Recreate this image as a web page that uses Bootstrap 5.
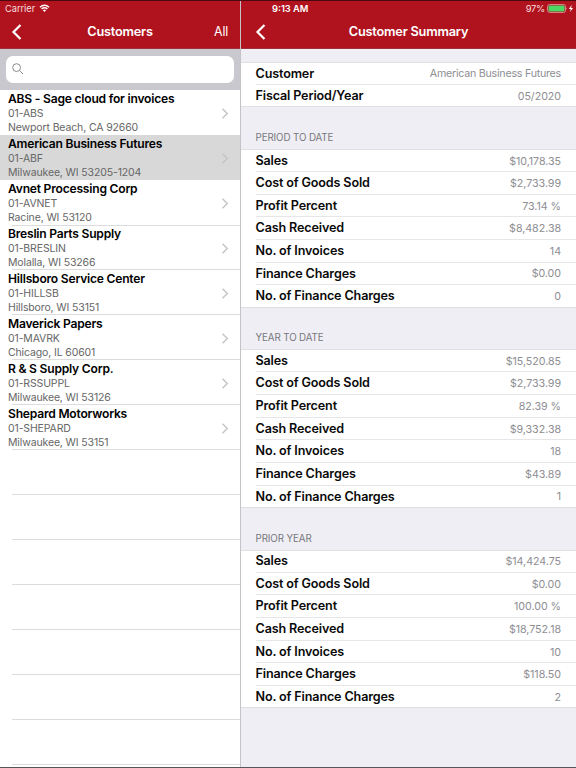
<!DOCTYPE html>
<html lang="en">
<head>
<meta charset="utf-8">
<meta name="viewport" content="width=device-width, initial-scale=1">
<title>Customer Summary</title>
<link href="https://cdn.jsdelivr.net/npm/bootstrap@5.3.0/dist/css/bootstrap.min.css" rel="stylesheet">
<style>
  body { font-family: Inter, "Liberation Sans", sans-serif; height: 768px; overflow: hidden; color: #0a0a0a; line-height: 1; }
  .app { height: 768px; border-top: 1px solid #4a0a0e; border-bottom: 1px solid #55555a; }
  .side { width: 241px; border-right: 1px solid #c3c3c8; }
  .bar { background: #b1131e; height: 47.5px; color: #fff; border-bottom: 1px solid #a1303c; }
  .status { height: 14px; font-size: 9.3px; padding-top: 1px; }
  .carrier { padding-left: 5px; letter-spacing: -.05px; color: #f6dcde; }
  .clock { padding-left: 31px; }
  .pct { letter-spacing: -.2px; padding-right: 2px; color: #f6dcde; }
  .batt { margin-right: 1px; }
  .titles { height: 32px; padding-top: 1.5px; font-size: 12.75px; letter-spacing: -.21px; }
  .titles .heading { font-weight: 600; padding-top: 2px; }
  .back { width: 40px; padding-left: 11px; }
  .detail .back { padding-left: 14px; }
  .all { width: 40px; padding: 1px 12px 0 0; font-size: 12.4px; }
  .search { background: #c9c8ce; height: 41.7px; padding: 7.4px 6px; }
  .field { background: #fff; height: 27px; border-radius: 7px; padding-left: 6px; }
  .cust { height: 44.93px; padding: 1.9px 11px 0 8px; position: relative; }
  .cust::after { content: ""; position: absolute; left: 12px; right: 0; bottom: -.6px; height: 1px; background: #dcdcde; }
  .cust.chosen { background: #d8d8d8; }
  .cust.chosen::after { display: none; }
  .cname { font-size: 12.1px; font-weight: 600; line-height: 14px; letter-spacing: -.22px; color: #000; }
  .cinfo { font-size: 10.5px; line-height: 13.7px; letter-spacing: -.13px; color: #666; }
  .cinfo:nth-child(2) { padding-top: 1.4px; }
  .detail { background: #efeef4; }
  .spacer { height: 13.3px; }
  .group { background: #fff; border-top: 1px solid #dfdee3; border-bottom: 1px solid #dfdee3; padding-left: 14.5px; }
  .line { height: 22.67px; padding-right: 15px; border-bottom: 1px solid #e6e6e8; }
  .line:first-child { height: 22px; }
  .line:last-child { border-bottom: 0; height: 21.4px; }
  .key { font-size: 12.6px; font-weight: 600; letter-spacing: -.15px; padding-top: 1.2px; }
  .val { font-size: 10.7px; letter-spacing: -.05px; color: #8e8e93; padding-top: 3px; }
  .who { letter-spacing: -.25px; }
  .section { height: 41.7px; padding: 0 0 6px 14.5px; font-size: 9.75px; letter-spacing: -.1px; color: #77777c; }
</style>
</head>
<body>
<div class="app d-flex">
  <aside class="side bg-white flex-shrink-0 overflow-hidden">
    <header class="bar">
      <div class="status carrier d-flex align-items-center">Carrier
        <svg class="ms-1" width="11" height="9" viewBox="0 0 12 9" fill="none" stroke="#fff" stroke-width="1.5"><path d="M1 3.1Q6-1.1 11 3.1M2.8 5Q6 2.3 9.2 5"/><path d="M4.2 6.3Q6 4.9 7.8 6.3L6 8.4Z" fill="#fff" stroke="none"/></svg>
      </div>
      <div class="titles d-flex align-items-center">
        <span class="back"><svg width="11" height="16" viewBox="0 0 11 16" fill="none" stroke="#fff" stroke-width="2.2"><path d="M9.5 1L2.5 8L9.5 15"/></svg></span>
        <span class="heading flex-fill text-center">Customers</span>
        <span class="all text-end">All</span>
      </div>
    </header>
    <div class="search">
      <div class="field d-flex align-items-center"><svg width="12" height="12" viewBox="0 0 12 12" fill="none" stroke="#8a8a8e"><circle cx="4.6" cy="4.6" r="3.9"/><path d="M7.4 7.4L11 11"/></svg></div>
    </div>
    <div class="cust d-flex justify-content-between"><div><div class="cname">ABS - Sage cloud for invoices</div><div class="cinfo">01-ABS</div><div class="cinfo">Newport Beach, CA 92660</div></div><svg class="chev align-self-center" width="8" height="11" viewBox="0 0 8 11" fill="none" stroke="#c3c3c8" stroke-width="1.4"><path d="M1.5 .7L6.3 5.5L1.5 10.3"/></svg></div>
    <div class="cust chosen d-flex justify-content-between"><div><div class="cname">American Business Futures</div><div class="cinfo">01-ABF</div><div class="cinfo">Milwaukee, WI 53205-1204</div></div><svg class="chev align-self-center" width="8" height="11" viewBox="0 0 8 11" fill="none" stroke="#c3c3c8" stroke-width="1.4"><path d="M1.5 .7L6.3 5.5L1.5 10.3"/></svg></div>
    <div class="cust d-flex justify-content-between"><div><div class="cname">Avnet Processing Corp</div><div class="cinfo">01-AVNET</div><div class="cinfo">Racine, WI 53120</div></div><svg class="chev align-self-center" width="8" height="11" viewBox="0 0 8 11" fill="none" stroke="#c3c3c8" stroke-width="1.4"><path d="M1.5 .7L6.3 5.5L1.5 10.3"/></svg></div>
    <div class="cust d-flex justify-content-between"><div><div class="cname">Breslin Parts Supply</div><div class="cinfo">01-BRESLIN</div><div class="cinfo">Molalla, WI 53266</div></div><svg class="chev align-self-center" width="8" height="11" viewBox="0 0 8 11" fill="none" stroke="#c3c3c8" stroke-width="1.4"><path d="M1.5 .7L6.3 5.5L1.5 10.3"/></svg></div>
    <div class="cust d-flex justify-content-between"><div><div class="cname">Hillsboro Service Center</div><div class="cinfo">01-HILLSB</div><div class="cinfo">Hillsboro, WI 53151</div></div><svg class="chev align-self-center" width="8" height="11" viewBox="0 0 8 11" fill="none" stroke="#c3c3c8" stroke-width="1.4"><path d="M1.5 .7L6.3 5.5L1.5 10.3"/></svg></div>
    <div class="cust d-flex justify-content-between"><div><div class="cname">Maverick Papers</div><div class="cinfo">01-MAVRK</div><div class="cinfo">Chicago, IL 60601</div></div><svg class="chev align-self-center" width="8" height="11" viewBox="0 0 8 11" fill="none" stroke="#c3c3c8" stroke-width="1.4"><path d="M1.5 .7L6.3 5.5L1.5 10.3"/></svg></div>
    <div class="cust d-flex justify-content-between"><div><div class="cname">R &amp; S Supply Corp.</div><div class="cinfo">01-RSSUPPL</div><div class="cinfo">Milwaukee, WI 53126</div></div><svg class="chev align-self-center" width="8" height="11" viewBox="0 0 8 11" fill="none" stroke="#c3c3c8" stroke-width="1.4"><path d="M1.5 .7L6.3 5.5L1.5 10.3"/></svg></div>
    <div class="cust d-flex justify-content-between"><div><div class="cname">Shepard Motorworks</div><div class="cinfo">01-SHEPARD</div><div class="cinfo">Milwaukee, WI 53151</div></div><svg class="chev align-self-center" width="8" height="11" viewBox="0 0 8 11" fill="none" stroke="#c3c3c8" stroke-width="1.4"><path d="M1.5 .7L6.3 5.5L1.5 10.3"/></svg></div>
    <div class="cust"></div><div class="cust"></div><div class="cust"></div><div class="cust"></div><div class="cust"></div><div class="cust"></div><div class="cust"></div>
  </aside>
  <main class="detail flex-fill overflow-hidden">
    <header class="bar">
      <div class="status d-flex align-items-center">
        <span class="clock fw-semibold">9:13 AM</span>
        <span class="pct ms-auto">97%</span>
        <svg class="batt" width="28" height="9" viewBox="0 0 28 9"><rect x=".5" y=".5" width="18" height="8" rx="2" fill="none" stroke="#d98289"/><rect x="1.5" y="1.5" width="16" height="6" rx="1" fill="#4bd964"/><path d="M19.4 3.2Q20.6 4.5 19.4 5.8Z" fill="#e0a0a5"/><path d="M24.7 1L21.9 5H23.8L23 8L26 4H24.1Z" fill="#fff"/></svg>
      </div>
      <div class="titles d-flex align-items-center">
        <span class="back"><svg width="11" height="16" viewBox="0 0 11 16" fill="none" stroke="#fff" stroke-width="2.2"><path d="M9.5 1L2.5 8L9.5 15"/></svg></span>
        <span class="heading flex-fill text-center">Customer Summary</span>
        <span class="all"></span>
      </div>
    </header>
    <div class="spacer"></div>
    <div class="group">
      <div class="line d-flex align-items-center justify-content-between"><span class="key">Customer</span><span class="val who">American Business Futures</span></div>
      <div class="line d-flex align-items-center justify-content-between"><span class="key">Fiscal Period/Year</span><span class="val">05/2020</span></div>
    </div>
    <div class="section d-flex align-items-end">PERIOD TO DATE</div>
    <div class="group">
      <div class="line d-flex align-items-center justify-content-between"><span class="key">Sales</span><span class="val">$10,178.35</span></div>
      <div class="line d-flex align-items-center justify-content-between"><span class="key">Cost of Goods Sold</span><span class="val">$2,733.99</span></div>
      <div class="line d-flex align-items-center justify-content-between"><span class="key">Profit Percent</span><span class="val">73.14 %</span></div>
      <div class="line d-flex align-items-center justify-content-between"><span class="key">Cash Received</span><span class="val">$8,482.38</span></div>
      <div class="line d-flex align-items-center justify-content-between"><span class="key">No. of Invoices</span><span class="val">14</span></div>
      <div class="line d-flex align-items-center justify-content-between"><span class="key">Finance Charges</span><span class="val">$0.00</span></div>
      <div class="line d-flex align-items-center justify-content-between"><span class="key">No. of Finance Charges</span><span class="val">0</span></div>
    </div>
    <div class="section d-flex align-items-end">YEAR TO DATE</div>
    <div class="group">
      <div class="line d-flex align-items-center justify-content-between"><span class="key">Sales</span><span class="val">$15,520.85</span></div>
      <div class="line d-flex align-items-center justify-content-between"><span class="key">Cost of Goods Sold</span><span class="val">$2,733.99</span></div>
      <div class="line d-flex align-items-center justify-content-between"><span class="key">Profit Percent</span><span class="val">82.39 %</span></div>
      <div class="line d-flex align-items-center justify-content-between"><span class="key">Cash Received</span><span class="val">$9,332.38</span></div>
      <div class="line d-flex align-items-center justify-content-between"><span class="key">No. of Invoices</span><span class="val">18</span></div>
      <div class="line d-flex align-items-center justify-content-between"><span class="key">Finance Charges</span><span class="val">$43.89</span></div>
      <div class="line d-flex align-items-center justify-content-between"><span class="key">No. of Finance Charges</span><span class="val">1</span></div>
    </div>
    <div class="section d-flex align-items-end">PRIOR YEAR</div>
    <div class="group">
      <div class="line d-flex align-items-center justify-content-between"><span class="key">Sales</span><span class="val">$14,424.75</span></div>
      <div class="line d-flex align-items-center justify-content-between"><span class="key">Cost of Goods Sold</span><span class="val">$0.00</span></div>
      <div class="line d-flex align-items-center justify-content-between"><span class="key">Profit Percent</span><span class="val">100.00 %</span></div>
      <div class="line d-flex align-items-center justify-content-between"><span class="key">Cash Received</span><span class="val">$18,752.18</span></div>
      <div class="line d-flex align-items-center justify-content-between"><span class="key">No. of Invoices</span><span class="val">10</span></div>
      <div class="line d-flex align-items-center justify-content-between"><span class="key">Finance Charges</span><span class="val">$118.50</span></div>
      <div class="line d-flex align-items-center justify-content-between"><span class="key">No. of Finance Charges</span><span class="val">2</span></div>
    </div>
  </main>
</div>
<script src="https://cdn.jsdelivr.net/npm/bootstrap@5.3.0/dist/js/bootstrap.bundle.min.js"></script>
</body>
</html>
